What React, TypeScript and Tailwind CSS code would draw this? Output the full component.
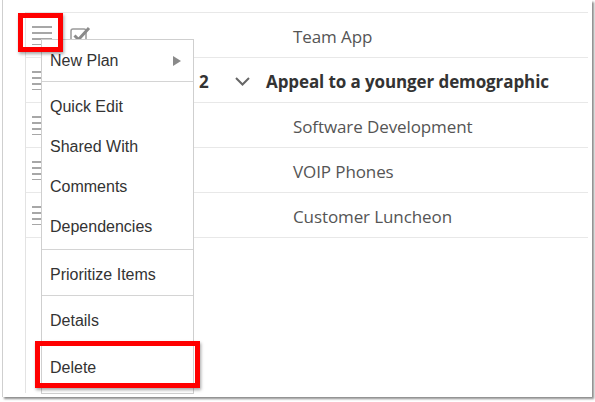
const rows = [
  { title: "Team App", level: 1 },
  { title: "Appeal to a younger demographic", level: 0, num: "2" },
  { title: "Software Development", level: 1 },
  { title: "VOIP Phones", level: 1 },
  { title: "Customer Luncheon", level: 1 },
]

function Lines() {
  return (
    <svg width="20" height="20" viewBox="0 0 20 20" className="shrink-0">
      <g stroke="#8a8a8a" strokeWidth="1.5">
        <line x1="0" y1="2" x2="20" y2="2" />
        <line x1="0" y1="8" x2="20" y2="8" />
        <line x1="0" y1="14" x2="20" y2="14" />
        <line x1="0" y1="20" x2="11" y2="20" />
      </g>
    </svg>
  )
}

function Check() {
  return (
    <svg width="22" height="20" viewBox="0 0 22 20" className="shrink-0">
      <rect x="1" y="4" width="15" height="15" rx="2" fill="none" stroke="#9a9a9a" strokeWidth="1.5" />
      <path d="M4.5 10.5 L8.5 14.5 L19 3" fill="none" stroke="#8a8a8a" strokeWidth="3" />
    </svg>
  )
}

function MenuItem({ label, arrow }: { label: string; arrow?: boolean }) {
  return (
    <div className="flex h-10 items-center justify-between pl-[8px] pr-[12px] text-[16px] text-[#333]">
      <span>{label}</span>
      {arrow && (
        <svg width="8" height="10" viewBox="0 0 8 10">
          <path d="M0 0 L8 5 L0 10 Z" fill="#8a8a8a" />
        </svg>
      )}
    </div>
  )
}

function Sep() {
  return <div className="h-px bg-[#d4d4d4]" />
}

export default function App() {
  return (
    <div className="relative h-[402px] w-[595px] overflow-hidden bg-white">
      <div className="ml-[2px] h-[397px] w-[590px] border-l border-[#cfcfcf] bg-white pl-[22px] pt-[12px] shadow-[2px_2px_2px_rgba(0,0,0,0.45)]">
        <div className="h-[381px] w-[563px] border-l border-[#e3e3e3]">
          <div className="h-px w-[562px] bg-[#e8e8e8]" />
          {rows.map((r, i) => (
            <div
              key={i}
              className="flex h-[45px] w-[562px] items-center border-b border-[#e8e8e8] pl-[6px]"
            >
              <Lines />
              <div className="ml-[18px] w-[22px]">{i === 0 && <Check />}</div>
              <div className="w-[107px]" />
              <div className="w-[36px] pt-[3px] font-['Open_Sans',sans-serif] text-[17px] font-bold text-[#333]">
                {r.num}
              </div>
              <div className="w-[31px] pt-[2px]">
                {r.num && (
                  <svg width="15" height="9" viewBox="0 0 15 9">
                    <path d="M1 1 L7.5 7.5 L14 1" fill="none" stroke="#666" strokeWidth="2" />
                  </svg>
                )}
              </div>
              <div
                className={`pt-[3px] font-['Open_Sans',sans-serif] text-[17px] ${
                  r.level === 0 ? "font-bold tracking-[-0.1px] text-[#333]" : "pl-[27px] tracking-[-0.1px] text-[#555]"
                }`}
              >
                {r.title}
              </div>
            </div>
          ))}
        </div>
      </div>

      <div className="absolute left-[41px] top-[39px] w-[153px] border border-[#cfcfcf] bg-white pb-[5px] font-['Liberation_Sans',Arial,sans-serif]">
        <div className="h-px" />
        <MenuItem label="New Plan" arrow />
        <Sep />
        <div className="h-[5px]" />
        <MenuItem label="Quick Edit" />
        <MenuItem label="Shared With" />
        <MenuItem label="Comments" />
        <MenuItem label="Dependencies" />
        <div className="h-[2px]" />
        <Sep />
        <div className="h-[5px]" />
        <MenuItem label="Prioritize Items" />
        <Sep />
        <div className="h-[5px]" />
        <MenuItem label="Details" />
        <div className="h-[2px]" />
        <Sep />
        <div className="h-[4px]" />
        <MenuItem label="Delete" />
      </div>

      <div className="absolute left-[18px] top-[13px] h-[39px] w-[45px] border-[5px] border-[#ff0000] shadow-[1px_2px_3px_rgba(0,0,0,0.35)]" />
      <div className="absolute left-[35px] top-[341px] h-[47px] w-[165px] border-[5px] border-[#ff0000] shadow-[1px_2px_3px_rgba(0,0,0,0.35)]" />
    </div>
  )
}
